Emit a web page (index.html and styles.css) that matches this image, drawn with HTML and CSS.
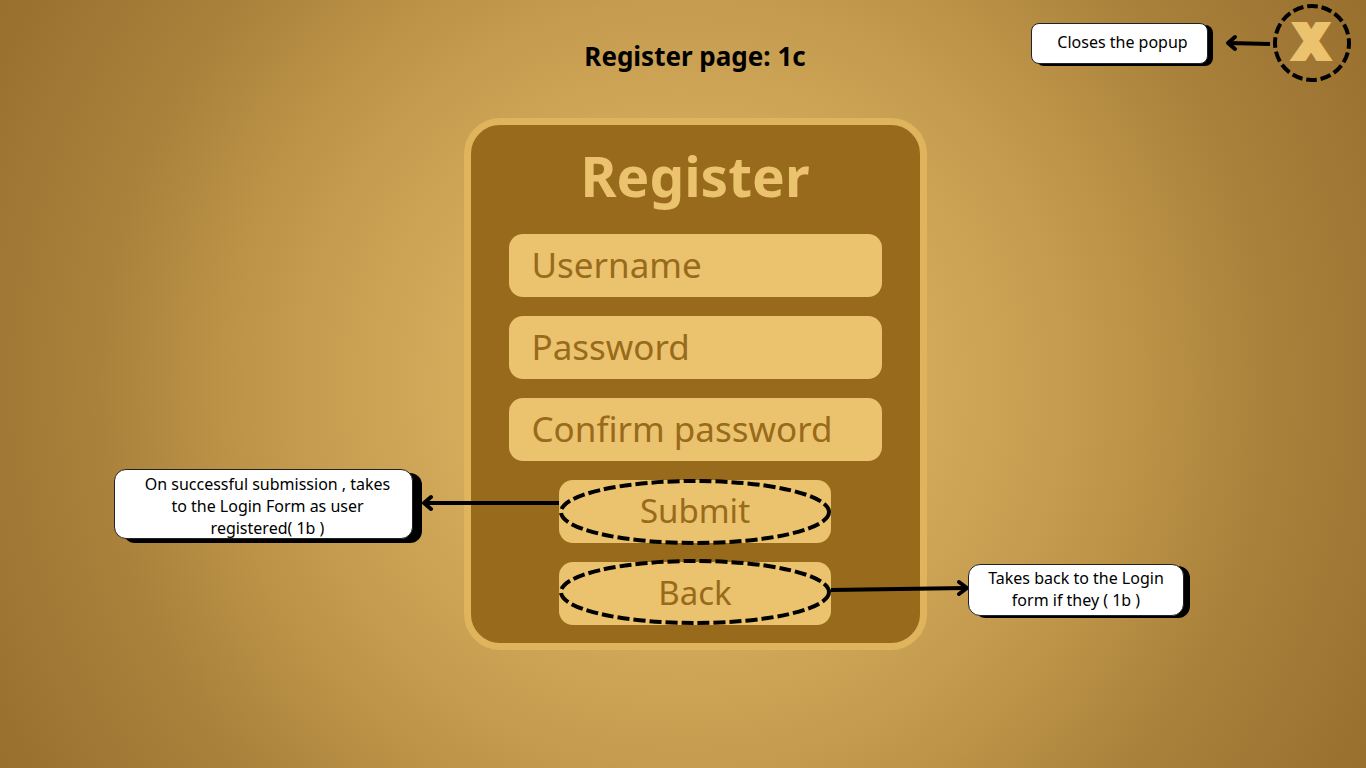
FILE: index.html
```html
<!DOCTYPE html>
<html lang="en">
<head>
  <meta charset="utf-8">
  <meta name="viewport" content="width=device-width, initial-scale=1">
  <title>Register page: 1c</title>
  <link rel="stylesheet" href="styles.css">
</head>
<body>
  <div class="page">
    <header class="header">
      <h1 class="page-title">Register page: 1c</h1>
      <div class="close-group">
        <p class="note note-close">Closes the popup</p>
        <svg class="close-arrow" width="48" height="20" viewBox="0 0 48 20" aria-hidden="true">
          <path class="stroke" d="M46 11 L4 10"/>
          <path class="stroke head" d="M11 4 L4 10 L11 16"/>
        </svg>
        <button class="close" type="button" aria-label="Close">
          <span>X</span>
          <svg class="ring" viewBox="0 0 80 80" aria-hidden="true">
            <circle class="dashes" cx="40" cy="40" r="37" pathLength="240" stroke-dasharray="11 4" stroke-dashoffset="5"/>
          </svg>
        </button>
      </div>
    </header>

    <main class="main">
      <form class="card">
        <h2 class="card-title">Register</h2>
        <input class="field" type="text" placeholder="Username" aria-label="Username">
        <input class="field" type="password" placeholder="Password" aria-label="Password">
        <input class="field" type="password" placeholder="Confirm password" aria-label="Confirm password">
        <div class="action">
          <button class="button" type="submit">Submit</button>
          <svg class="ring" viewBox="0 0 272 68" aria-hidden="true">
            <ellipse class="dashes" cx="136" cy="32" rx="134" ry="31" stroke-dasharray="12 4"/>
          </svg>
          <svg class="arrow arrow-left" width="140" height="20" viewBox="0 0 140 20" aria-hidden="true">
            <path class="stroke" d="M140 10 L5 10"/>
            <path class="stroke head" d="M12 4 L5 10 L12 16"/>
          </svg>
          <p class="note note-submit">On successful submission , takes to the Login Form as user registered( 1b )</p>
        </div>
        <div class="action">
          <button class="button" type="button">Back</button>
          <svg class="ring ring-back" viewBox="0 0 272 68" aria-hidden="true">
            <ellipse class="dashes" cx="136" cy="34" rx="134" ry="31" stroke-dasharray="12 4"/>
          </svg>
          <svg class="arrow arrow-right" width="140" height="20" viewBox="0 0 140 20" aria-hidden="true">
            <path class="stroke" d="M0 12 L135 10"/>
            <path class="stroke head" d="M128 4 L136 10 L128 16"/>
          </svg>
          <p class="note note-back">Takes back to the Login form if they ( 1b )</p>
        </div>
      </form>
    </main>
  </div>
</body>
</html>
```
FILE: styles.css
```css
* {
  box-sizing: border-box;
}

body {
  margin: 0;
  font-family: "Noto Sans", "Open Sans", sans-serif;
  color: #000;
}

.page {
  min-height: 100vh;
  padding-left: 24px;
  overflow: hidden;
  background: radial-gradient(circle farthest-corner at center, #dfb563 0%, #d4aa5b 29%, #c59b4f 49%, #bc9247 59%, #aa823b 74%, #a17835 87%, #996f2d 100%);
}

.header {
  display: grid;
  grid-template-columns: 1fr auto 1fr;
  align-items: start;
  min-height: 118px;
  padding: 3px 14px 0 0;
}

.page-title {
  grid-column: 2;
  margin: 33px 0 0 14px;
  font-size: 26px;
  line-height: 40px;
  font-weight: 700;
}

.close-group {
  justify-self: end;
  display: flex;
  align-items: center;
}

.note {
  margin: 0;
  background: #fff;
  border: 1px solid #222;
  border-radius: 12px;
  font-size: 16px;
  line-height: 22px;
  text-align: center;
}

.note-close {
  padding: 7px 17px 10px 23px;
  min-width: 177px;
  border-radius: 8px;
  box-shadow: 5px 2px 0 #000;
}

.close-arrow {
  margin-left: 16px;
}

.close {
  position: relative;
  width: 80px;
  height: 80px;
  padding: 0 2px 2px 0;
  border: 0;
  background: none;
  color: #ebc26d;
  font-family: Inter, sans-serif;
  font-size: 48px;
  line-height: 76px;
  font-weight: 900;
  -webkit-text-stroke: 4px #ebc26d;
}

.stroke,
.dashes {
  fill: none;
  stroke: #000;
  stroke-width: 4;
}

.head {
  stroke-linecap: round;
  stroke-linejoin: round;
}

.main {
  display: flex;
  justify-content: center;
}

.card {
  display: flex;
  flex-direction: column;
  align-items: center;
  gap: 19px;
  width: 463px;
  padding: 16px 38px 18px;
  border: 7px solid #deb45c;
  border-radius: 36px;
  background: #986a1b;
}

.card-title {
  margin: 0 0 4px;
  font-size: 55px;
  line-height: 70px;
  font-weight: 700;
  color: #ebc26d;
}

.field,
.button {
  width: 100%;
  height: 63px;
  border: 0;
  border-radius: 14px;
  background: #ebc26d;
  color: #986a1b;
  font-family: inherit;
  font-size: 35px;
}

.field {
  padding: 0 23px 2px;
}

.field::placeholder {
  color: #986a1b;
  opacity: 1;
}

.button {
  padding: 0 0 2px;
  font-size: 33px;
}

.action {
  position: relative;
  width: 272px;
  height: 63px;
}

.ring {
  position: absolute;
  left: 0;
  top: 0;
  width: 100%;
  overflow: visible;
  pointer-events: none;
}

.ring-back {
  top: -4px;
}

.arrow {
  position: absolute;
}

.arrow-left {
  right: 100%;
  top: 13px;
}

.arrow-right {
  left: 100%;
  top: 16px;
}

.action .note {
  position: absolute;
}

.note-submit {
  right: 418px;
  top: -11px;
  width: 299px;
  height: 70px;
  padding: 3px 14px 0 22px;
  box-shadow: 9px 4px 0 #000;
}

.note-back {
  left: 409px;
  top: 2px;
  width: 216px;
  padding: 2px 12px 4px;
  box-shadow: 6px 2px 0 #000;
}
```
